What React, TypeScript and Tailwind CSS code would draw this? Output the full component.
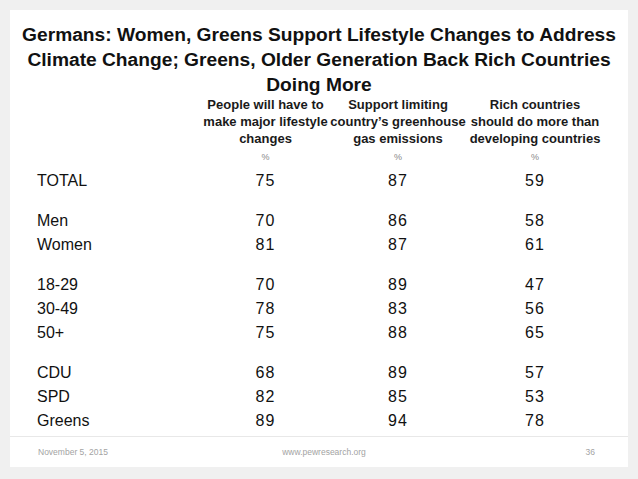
import React from "react";

const groups = [
  [["TOTAL", "75", "87", "59"]],
  [
    ["Men", "70", "86", "58"],
    ["Women", "81", "87", "61"],
  ],
  [
    ["18-29", "70", "89", "47"],
    ["30-49", "78", "83", "56"],
    ["50+", "75", "88", "65"],
  ],
  [
    ["CDU", "68", "89", "57"],
    ["SPD", "82", "85", "53"],
    ["Greens", "89", "94", "78"],
  ],
];

const headers = [
  ["People will have to", "make major lifestyle", "changes"],
  ["Support limiting", "country\u2019s greenhouse", "gas emissions"],
  ["Rich countries", "should do more than", "developing countries"],
];

const cols = "grid grid-cols-[163px_131px_134px_140px]";

const App = () => {
  return (
    <div
      className="w-[638px] h-[479px] bg-[#f0f0f0] pt-[10px] pl-[10px]"
      style={{ fontFamily: '"Liberation Sans", Arial, sans-serif' }}
    >
      <div className="w-[618px] h-[457px] bg-white flex flex-col">
        <h1 className="pt-[12px] px-[4px] text-center font-bold text-[19.2px] leading-[25px] text-[#111]">
          Germans: Women, Greens Support Lifestyle Changes to Address
          <br />
          Climate Change; Greens, Older Generation Back Rich Countries
          <br />
          Doing More
        </h1>

        <div className={`${cols} pl-[27px] -mt-[1px]`}>
          <div />
          {headers.map((lines, i) => (
            <div key={i} className="flex flex-col items-center">
              {lines.map((line) => (
                <div key={line} className="whitespace-nowrap font-bold text-[13px] leading-[17px] text-[#1a1a1a]">
                  {line}
                </div>
              ))}
              <div className="mt-[3px] text-[9px] leading-[14px] text-[#888]">%</div>
            </div>
          ))}
        </div>

        <div className="mt-[5px] pl-[27px] flex flex-col gap-[16px]">
          {groups.map((rows, gi) => (
            <div key={gi} className="flex flex-col">
              {rows.map((row) => (
                <div key={row[0]} className={`${cols} text-[16px] leading-[24px] text-[#111]`}>
                  <div>{row[0]}</div>
                  <div className="text-center tracking-[1px]">{row[1]}</div>
                  <div className="text-center tracking-[1px]">{row[2]}</div>
                  <div className="text-center tracking-[1px]">{row[3]}</div>
                </div>
              ))}
            </div>
          ))}
        </div>

        <div className="mt-auto h-[31px] border-t border-[#e8e8e8] grid grid-cols-[1fr_auto_1fr] items-center pl-[28px] pr-[33px] text-[8.5px] text-[#a3a3a3]">
          <div>November 5, 2015</div>
          <div className="pl-[15px]">www.pewresearch.org</div>
          <div className="text-right">36</div>
        </div>
      </div>
    </div>
  );
};

export default App;
